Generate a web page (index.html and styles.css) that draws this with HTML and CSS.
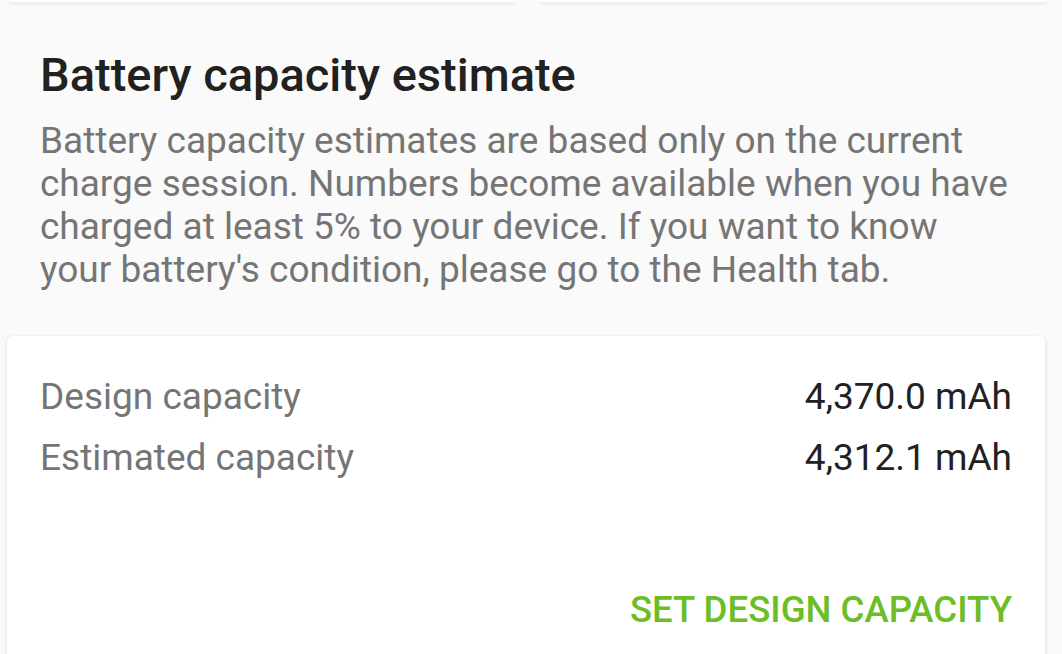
FILE: index.html
```html
<!DOCTYPE html>
<html>
<head>
<meta charset="utf-8">
<link rel="stylesheet" href="styles.css">
</head>
<body>
<div class="toprow">
	<div class="topcard"></div>
	<div class="topcard"></div>
</div>
<div class="section">
	<h1 class="title">Battery capacity estimate</h1>
	<p class="desc">Battery capacity estimates are based only on the current charge session. Numbers become available when you have charged at least 5% to your device. If you want to know your battery's condition, please go to the Health tab.</p>
</div>
<div class="card">
	<div class="row">
		<span class="label">Design capacity</span>
		<span class="value">4,370.0 mAh</span>
	</div>
	<div class="row">
		<span class="label">Estimated capacity</span>
		<span class="value">4,312.1 mAh</span>
	</div>
	<div class="actions">
		<span class="button">SET DESIGN CAPACITY</span>
	</div>
</div>
</body>
</html>
```
FILE: styles.css
```css
html, body {
	margin: 0;
	padding: 0;
	height: 100%;
	overflow: hidden;
}
body {
	font-family: Roboto, "Liberation Sans", sans-serif;
	background-color: #fafafa;
}
.toprow {
	display: flex;
	gap: 25px;
	padding: 0 16px 0 9px;
	height: 2px;
}
.topcard {
	flex: 1;
	height: 2px;
	background: #ffffff;
	box-shadow: 0 1px 4px rgba(0, 0, 0, 0.16);
	border-radius: 0 0 6px 6px;
}
.section {
	padding: 45px 40px 0 40px;
}
.title {
	font-size: 47px;
	font-weight: 500;
	color: #212121;
	margin: 0;
	line-height: 56px;
}
.desc {
	font-size: 37px;
	color: #757575;
	margin: 16px 0 0 0;
	line-height: 43px;
	max-width: 972px;
}
.card {
	margin: 45px 17px 0 7px;
	background: #ffffff;
	border-radius: 6px;
	box-shadow: 0 1px 4px rgba(0, 0, 0, 0.14);
	padding: 30px 33px 40px 33px;
	height: 400px;
}
.row {
	display: flex;
	justify-content: space-between;
	font-size: 37px;
	line-height: 61px;
}
.label {
	color: #757575;
}
.value {
	color: #212121;
}
.actions {
	display: flex;
	justify-content: flex-end;
	margin-top: 100px;
	line-height: 43px;
}
.button {
	font-size: 36.6px;
	font-weight: 500;
	color: #6cbd26;
}
```
